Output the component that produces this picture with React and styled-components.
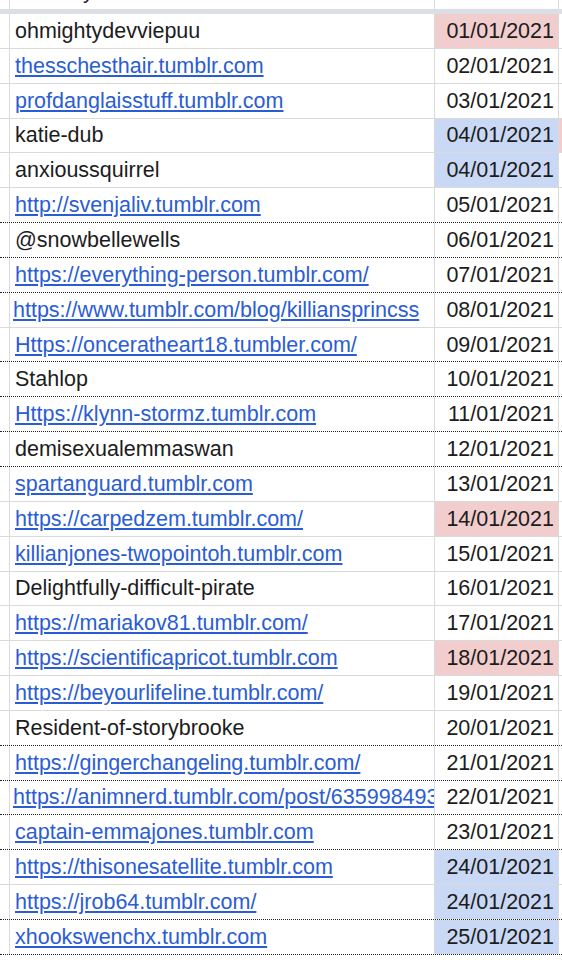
import styled, { createGlobalStyle } from 'styled-components';

const GlobalStyle = createGlobalStyle`
  body {
    margin: 0;
    background: #ffffff;
    font-family: "Liberation Sans", Arial, Helvetica, sans-serif;
  }
`;

const GRID_LINE = '#dadada';
const COLUMNS = '10px 425px 124px 1fr';

const FILLS = {
  pink: '#f1cdcd',
  blue: '#c9d9f5',
};

// bottom border of each row: solid grid line or dotted black
const entries = [
  { name: 'ohmightydevviepuu', date: '01/01/2021', fill: 'pink', line: 'solid' },
  { name: 'thesschesthair.tumblr.com', link: true, date: '02/01/2021', line: 'solid' },
  { name: 'profdanglaisstuff.tumblr.com', link: true, date: '03/01/2021', line: 'solid' },
  { name: 'katie-dub', date: '04/01/2021', fill: 'blue', extra: 'pink', line: 'solid' },
  { name: 'anxioussquirrel', date: '04/01/2021', fill: 'blue', line: 'solid' },
  { name: 'http://svenjaliv.tumblr.com', link: true, date: '05/01/2021', line: 'dotted' },
  { name: '@snowbellewells', date: '06/01/2021', line: 'dotted' },
  { name: 'https://everything-person.tumblr.com/', link: true, date: '07/01/2021', line: 'dotted' },
  { name: 'https://www.tumblr.com/blog/killiansprincss', link: true, tight: true, date: '08/01/2021', line: 'solid' },
  { name: 'Https://onceratheart18.tumbler.com/', link: true, date: '09/01/2021', line: 'dotted' },
  { name: 'Stahlop', date: '10/01/2021', line: 'dotted' },
  { name: 'Https://klynn-stormz.tumblr.com', link: true, date: '11/01/2021', line: 'dotted' },
  { name: 'demisexualemmaswan', date: '12/01/2021', line: 'dotted' },
  { name: 'spartanguard.tumblr.com', link: true, date: '13/01/2021', line: 'solid' },
  { name: 'https://carpedzem.tumblr.com/', link: true, date: '14/01/2021', fill: 'pink', line: 'solid' },
  { name: 'killianjones-twopointoh.tumblr.com', link: true, date: '15/01/2021', line: 'solid' },
  { name: 'Delightfully-difficult-pirate', date: '16/01/2021', line: 'solid' },
  { name: 'https://mariakov81.tumblr.com/', link: true, date: '17/01/2021', line: 'solid' },
  { name: 'https://scientificapricot.tumblr.com', link: true, date: '18/01/2021', fill: 'pink', line: 'solid' },
  { name: 'https://beyourlifeline.tumblr.com/', link: true, date: '19/01/2021', line: 'solid' },
  { name: 'Resident-of-storybrooke', date: '20/01/2021', line: 'dotted' },
  { name: 'https://gingerchangeling.tumblr.com/', link: true, date: '21/01/2021', line: 'dotted' },
  { name: 'https://animnerd.tumblr.com/post/6359984933', link: true, tight: true, date: '22/01/2021', line: 'dotted' },
  { name: 'captain-emmajones.tumblr.com', link: true, date: '23/01/2021', line: 'dotted' },
  { name: 'https://thisonesatellite.tumblr.com', link: true, date: '24/01/2021', fill: 'blue', line: 'solid' },
  { name: 'https://jrob64.tumblr.com/', link: true, date: '24/01/2021', fill: 'blue', line: 'dotted' },
  { name: 'xhookswenchx.tumblr.com', link: true, date: '25/01/2021', fill: 'blue', line: 'dotted' },
];

const Sheet = styled.div`
  display: flex;
  flex-direction: column;
  width: 562px;
  overflow: hidden;
  font-size: 21.5px;
  color: #1c1c1c;
`;

const HeaderRow = styled.div`
  display: grid;
  grid-template-columns: ${COLUMNS};
  height: 9px;
`;

const FrozenBand = styled.div`
  height: 5px;
  background: #dadee5;
`;

const Row = styled.div`
  display: grid;
  grid-template-columns: ${COLUMNS};
  height: 34.85px;
  box-sizing: border-box;
  border-bottom: 1px
    ${p => (p.$line === 'dotted' ? 'dotted #222' : `solid ${GRID_LINE}`)};
`;

const Gutter = styled.div`
  border-right: 1px solid ${GRID_LINE};
`;

const HeaderCell = styled.div`
  border-right: 1px solid ${GRID_LINE};
  overflow: hidden;
  padding-left: 5px;

  span {
    display: block;
    line-height: 24px;
    margin-top: -21px;
    white-space: nowrap;
  }
`;

const NameCell = styled.div`
  display: flex;
  align-items: center;
  padding-left: ${p => (p.$tight ? 3 : 5)}px;
  border-right: 1px solid ${GRID_LINE};
  overflow: hidden;
  white-space: nowrap;
  line-height: 24px;
`;

const DateCell = styled.div`
  display: flex;
  align-items: center;
  justify-content: flex-end;
  padding-right: 4px;
  border-right: 1px solid ${GRID_LINE};
  background: ${p => FILLS[p.$fill] || 'transparent'};
  line-height: 24px;
`;

const Overflow = styled.div`
  background: ${p => FILLS[p.$fill] || 'transparent'};
`;

const Link = styled.a`
  color: #2a5dd4;
  text-decoration: underline;
  text-underline-offset: 2px;
`;

export default function App() {
  return (
    <>
      <GlobalStyle />
      <Sheet>
        <HeaderRow>
          <Gutter />
          <HeaderCell>
            <span>Birthday</span>
          </HeaderCell>
          <HeaderCell />
          <div />
        </HeaderRow>
        <FrozenBand />
        {entries.map((entry, i) => (
          <Row key={i} $line={entry.line}>
            <Gutter />
            <NameCell $tight={entry.tight}>
              {entry.link ? <Link href="#">{entry.name}</Link> : entry.name}
            </NameCell>
            <DateCell $fill={entry.fill}>{entry.date}</DateCell>
            <Overflow $fill={entry.extra} />
          </Row>
        ))}
      </Sheet>
    </>
  );
}
